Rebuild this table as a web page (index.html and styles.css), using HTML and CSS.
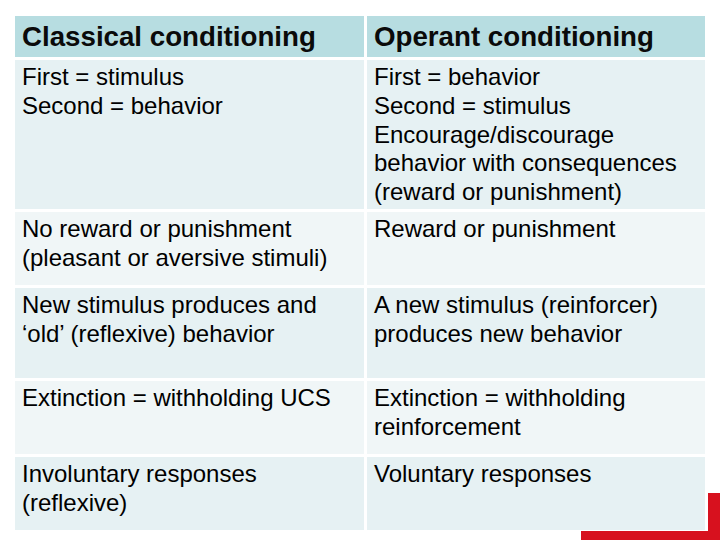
FILE: index.html
```html
<!DOCTYPE html>
<html>
<head>
<meta charset="utf-8">
<link rel="stylesheet" href="styles.css">
</head>
<body>
<div class="accent"></div>
<div class="table">
  <div class="cell head">Classical conditioning</div>
  <div class="cell head">Operant conditioning</div>

  <div class="cell dark">First = stimulus<br>Second = behavior</div>
  <div class="cell dark">First = behavior<br>Second = stimulus<br>Encourage/discourage behavior with consequences (reward or punishment)</div>

  <div class="cell light">No reward or punishment (pleasant or aversive stimuli)</div>
  <div class="cell light">Reward or punishment</div>

  <div class="cell dark">New stimulus produces and ‘old’ (reflexive) behavior</div>
  <div class="cell dark">A new stimulus (reinforcer) produces new behavior</div>

  <div class="cell light">Extinction = withholding UCS</div>
  <div class="cell light">Extinction = withholding reinforcement</div>

  <div class="cell dark">Involuntary responses (reflexive)</div>
  <div class="cell dark">Voluntary responses</div>
</div>
</body>
</html>
```
FILE: styles.css
```css
html, body {
  margin: 0;
  padding: 0;
  background: #ffffff;
}
body {
  width: 720px;
  height: 540px;
  overflow: hidden;
  position: relative;
  font-family: "Liberation Sans", Arial, sans-serif;
  color: #000000;
}
.accent {
  position: absolute;
  left: 581px;
  top: 493px;
  width: 139px;
  height: 47px;
  background: #d7111e;
}
.table {
  position: relative;
  z-index: 1;
  display: inline-grid;
  grid-template-columns: 349px 338px;
  grid-template-rows: 41px 149px 73px 90px 73px 73px;
  gap: 3px;
  margin: 16px 0 0 15px;
  padding: 0 3px 1px 0;
  background: #ffffff;
}
.cell {
  font-size: 24px;
  line-height: 28.8px;
  padding: 3px 8px 0 7px;
}
.head {
  background: #b7dde1;
  font-weight: bold;
  font-size: 27.7px;
  color: #0a0a0a;
  display: flex;
  align-items: center;
  padding-top: 1px;
}
.dark {
  background: #e6f1f3;
}
.light {
  background: #f0f6f7;
}
```
